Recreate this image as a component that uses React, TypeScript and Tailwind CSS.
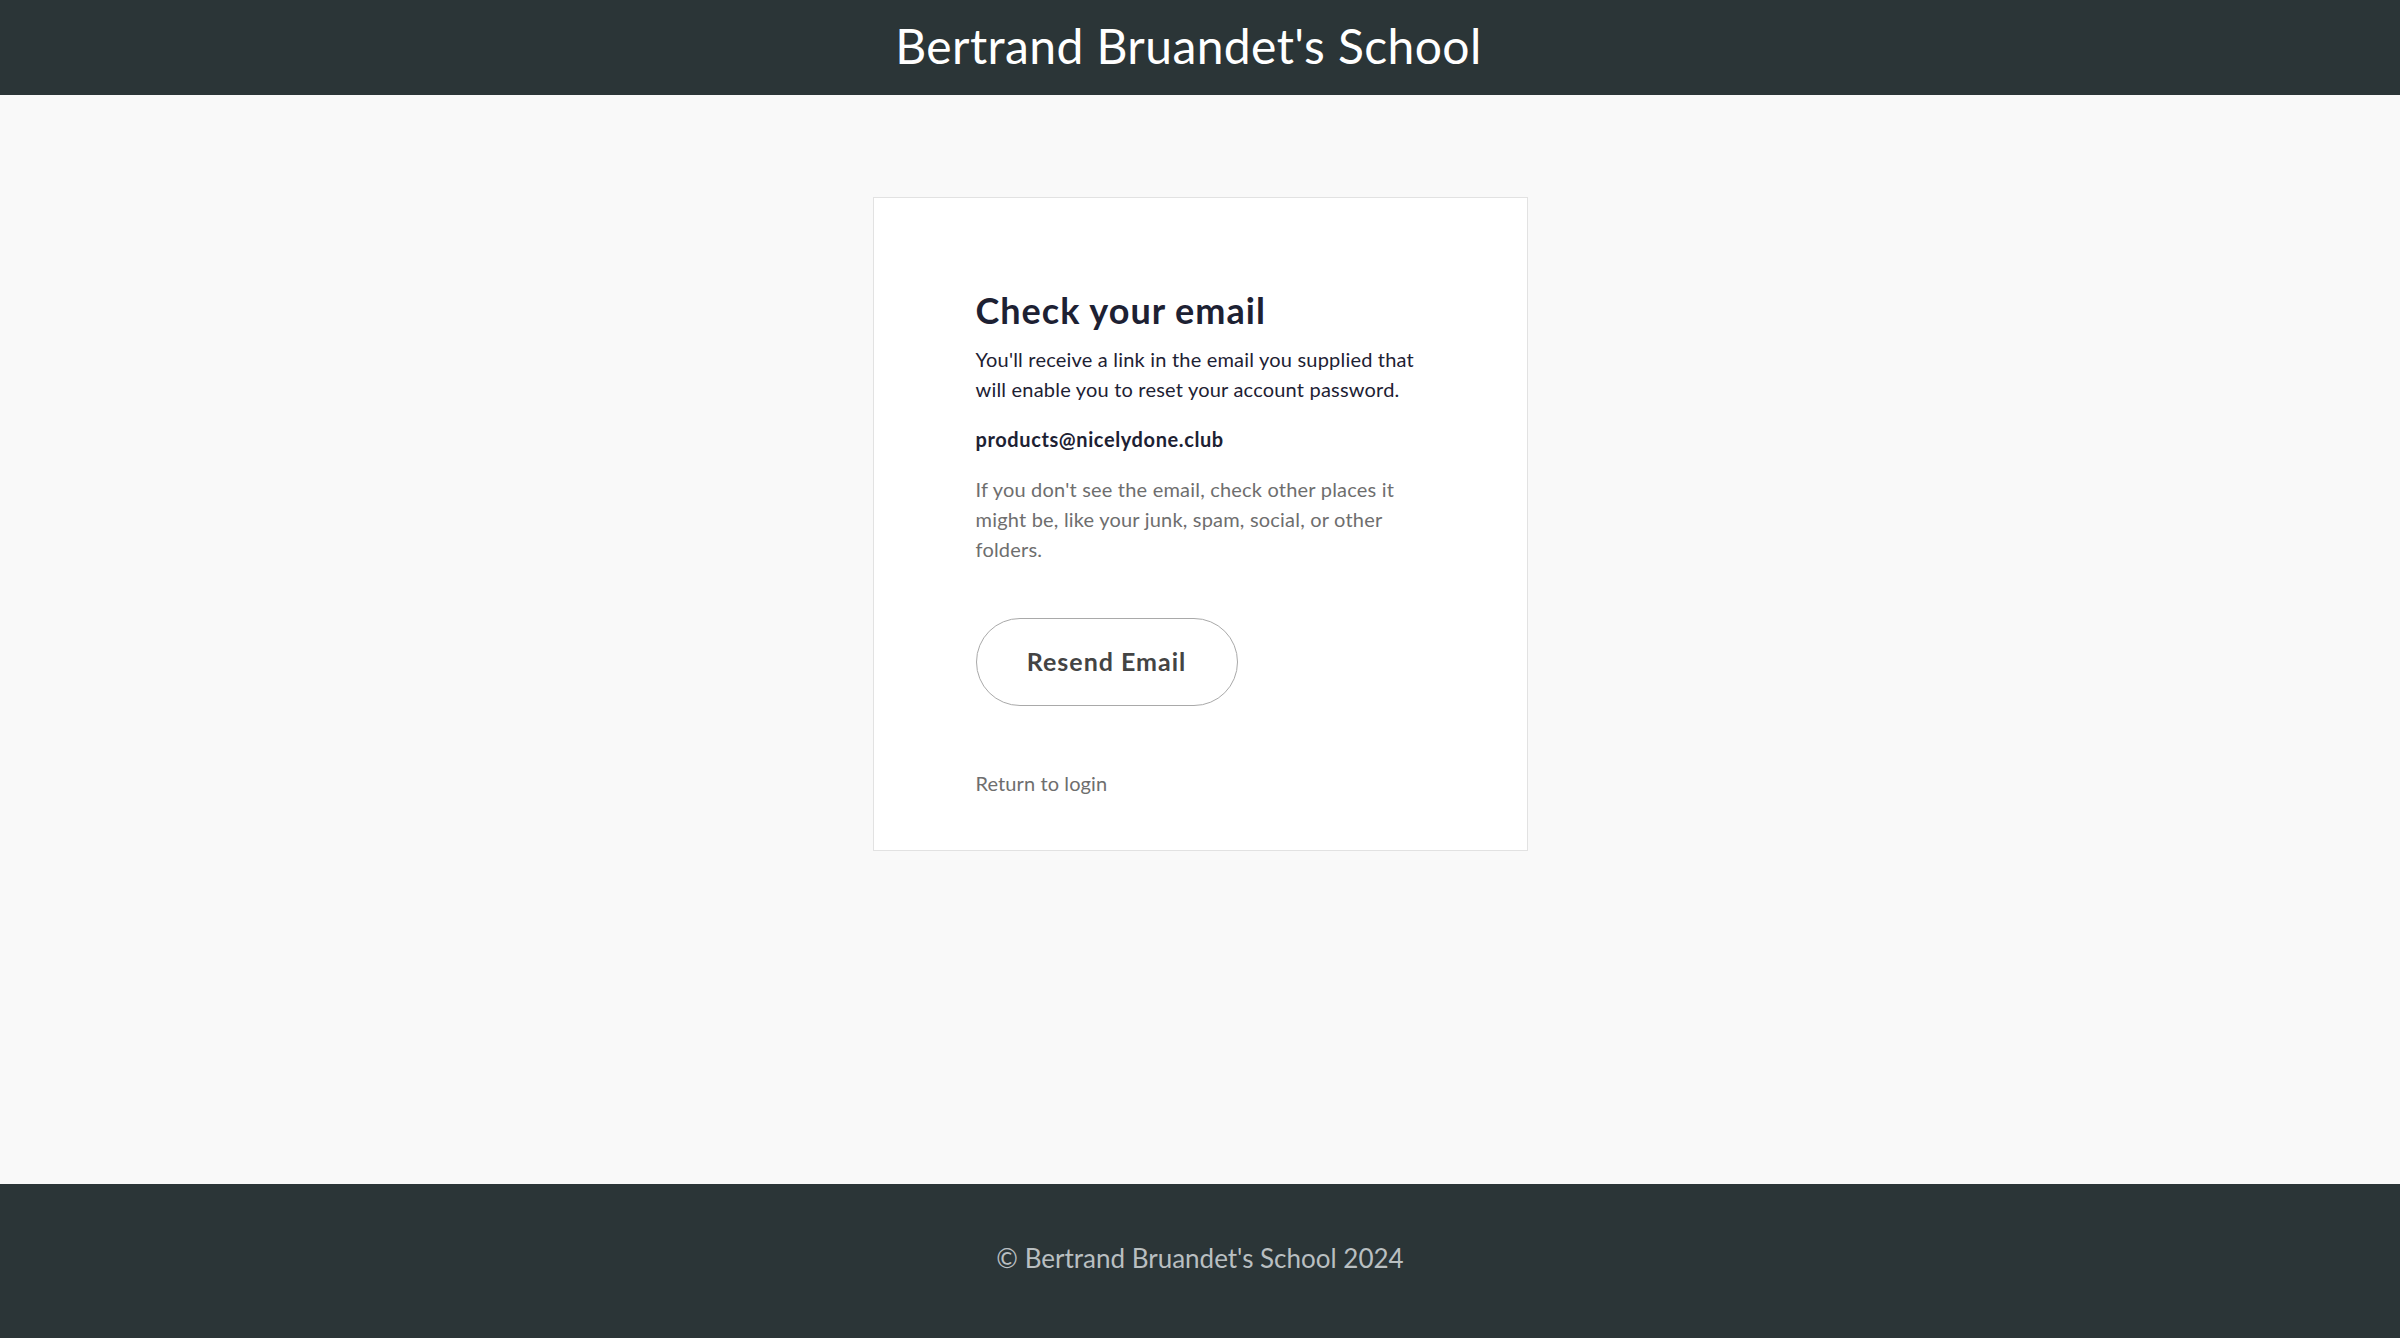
const font = { fontFamily: "Lato, 'Noto Sans', sans-serif" };

export default function App() {
  return (
    <div className="flex min-h-screen flex-col bg-[#f9f9f9]" style={font}>
      <header className="flex h-[95px] items-center justify-center bg-[#2b3537] pr-[23px] pb-[3px]">
        <h1 className="text-[48px] font-normal leading-none tracking-[0.4px] text-white">Bertrand Bruandet's School</h1>
      </header>

      <main className="flex flex-1 justify-center">
        <div className="mt-[102px] mb-[100px] h-fit w-[655px] border border-[#e2e2e2] bg-white px-[102px] pt-[91px] pb-[52px]">
          <h2 className="text-[36px] font-bold leading-[42px] tracking-[1px] text-[#1d2133]">Check your email</h2>
          <p className="mt-[13px] text-[20px] leading-[30px] tracking-[0.2px] text-[#1d2133]">
            You'll receive a link in the email you supplied that will enable you to reset your account password.
          </p>
          <p className="mt-[20px] text-[20px] font-bold leading-[30px] tracking-[0.6px] text-[#1d2133]">
            products@nicelydone.club
          </p>
          <p className="mt-[20px] text-[20px] leading-[30px] tracking-[0.2px] text-[#6e6e6e]">
            If you don't see the email, check other places it might be, like your junk, spam, social, or other folders.
          </p>
          <button className="mt-[54px] h-[88px] w-[262px] rounded-full border border-[#a9a9a9] bg-white text-[25px] font-bold tracking-[1px] text-[#444444]">
            Resend Email
          </button>
          <div className="mt-[62px]">
            <a href="#" className="text-[20px] leading-[30px] tracking-[0.1px] text-[#6e6e6e]">
              Return to login
            </a>
          </div>
        </div>
      </main>

      <footer className="flex h-[154px] items-center justify-center bg-[#2b3537] pb-[5px]">
        <p className="text-[26px] text-[#b9bfc1]">© Bertrand Bruandet's School 2024</p>
      </footer>
    </div>
  );
}
